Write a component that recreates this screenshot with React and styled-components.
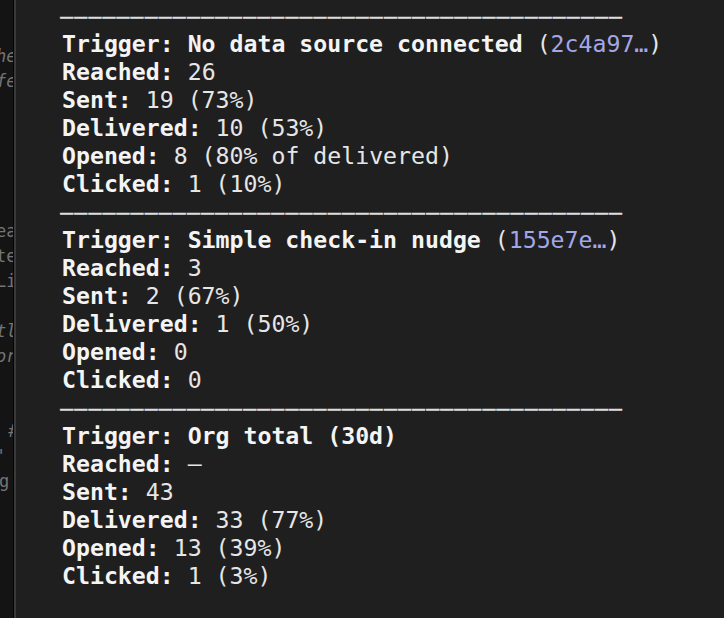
import React from 'react';
import styled, { createGlobalStyle } from 'styled-components';

const GlobalStyle = createGlobalStyle`
  html, body {
    margin: 0;
    padding: 0;
    background: #1f1f1f;
  }
  #root {
    height: 100vh;
  }
`;

const Screen = styled.div`
  display: flex;
  width: 100%;
  height: 100vh;
  overflow: hidden;
  background: #1f1f1f;
`;

const EditorStrip = styled.div`
  flex: 0 0 13px;
  background: #141414;
  border-right: 1px solid #050505;
  overflow: hidden;
  padding-top: 44px;
  font-family: 'DejaVu Sans Mono', monospace;
  font-size: 17px;
  line-height: 25px;
  color: #747474;
`;

const CodeLine = styled.div`
  height: 25px;
  white-space: pre;
  margin-left: ${(p) => p.$shift || -4}px;
  font-style: ${(p) => (p.$italic ? 'italic' : 'normal')};
`;

const Terminal = styled.div`
  flex: 1;
  border-left: 2px solid #3a3a3a;
  background: #1f1f1f;
  padding: 2px 0 0 46px;
  font-family: 'DejaVu Sans Mono', monospace;
  font-size: 23.2px;
  line-height: 28px;
  color: #ececec;
`;

const Line = styled.div`
  white-space: pre;
  height: 28px;
`;

/* box-drawing rule: slightly smaller glyphs plus spacing leave the small gaps seen between dashes */
const Rule = styled(Line)`
  color: #dcdcdc;
  font-size: 21.8px;
  letter-spacing: 0.95px;
  line-height: 31px;
  margin-left: -2px;
`;

const Label = styled.span`
  font-weight: bold;
  color: #f4f4f4;
`;

const Value = styled.span`
  font-weight: normal;
  color: #e6e6e6;
`;

const Hash = styled.span`
  color: #a3a7e9;
`;

const codeLines = [
  { text: 'he', italic: true },
  { text: 'fe', italic: true },
  {}, {}, {}, {}, {},
  { text: 'ea' },
  { text: 'te' },
  { text: 'Li' },
  {},
  { text: 'tl', italic: true },
  { text: 'or', italic: true },
  {}, {},
  { text: ' #', shift: -2 },
  { text: "'", shift: 0 },
  { text: 'g.', shift: -1 },
];

const triggers = [
  {
    name: 'No data source connected',
    hash: '2c4a97…',
    stats: [
      ['Reached', '26'],
      ['Sent', '19 (73%)'],
      ['Delivered', '10 (53%)'],
      ['Opened', '8 (80% of delivered)'],
      ['Clicked', '1 (10%)'],
    ],
  },
  {
    name: 'Simple check-in nudge',
    hash: '155e7e…',
    stats: [
      ['Reached', '3'],
      ['Sent', '2 (67%)'],
      ['Delivered', '1 (50%)'],
      ['Opened', '0'],
      ['Clicked', '0'],
    ],
  },
  {
    name: 'Org total (30d)',
    stats: [
      ['Reached', '—'],
      ['Sent', '43'],
      ['Delivered', '33 (77%)'],
      ['Opened', '13 (39%)'],
      ['Clicked', '1 (3%)'],
    ],
  },
];

const RULE = '─'.repeat(40);

function TriggerBlock({ trigger }) {
  return (
    <>
      <Rule>{RULE}</Rule>
      <Line>
        <Label>Trigger: {trigger.name}</Label>
        {trigger.hash && (
          <Value>
            {' ('}
            <Hash>{trigger.hash}</Hash>
            {')'}
          </Value>
        )}
      </Line>
      {trigger.stats.map(([label, value]) => (
        <Line key={label}>
          <Label>{label}:</Label>
          <Value> {value}</Value>
        </Line>
      ))}
    </>
  );
}

export default function App() {
  return (
    <>
      <GlobalStyle />
      <Screen>
        <EditorStrip>
          {codeLines.map((l, i) => (
            <CodeLine key={i} $italic={l.italic} $shift={l.shift}>
              {l.text || ''}
            </CodeLine>
          ))}
        </EditorStrip>
        <Terminal>
          {triggers.map((t) => (
            <TriggerBlock key={t.name} trigger={t} />
          ))}
        </Terminal>
      </Screen>
    </>
  );
}
